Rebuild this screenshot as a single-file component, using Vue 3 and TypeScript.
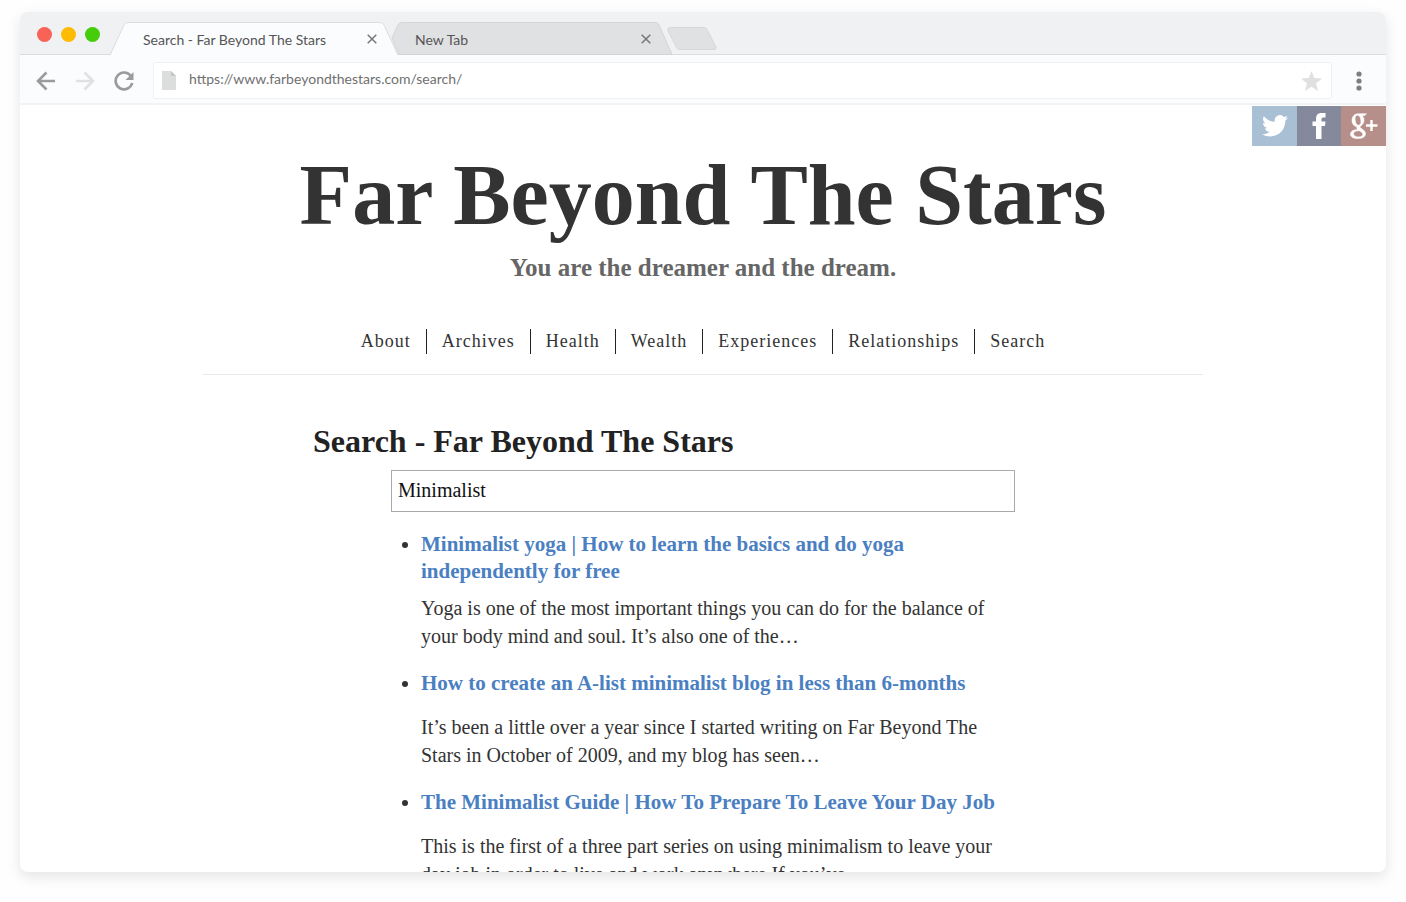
<script setup lang="ts">
import { ref } from 'vue'

interface Result {
  title: string
  excerpt: string
}

const query = ref('Minimalist')
const address = ref('https://www.farbeyondthestars.com/search/')

const links: string[] = ['About', 'Archives', 'Health', 'Wealth', 'Experiences', 'Relationships', 'Search']

const results: Result[] = [
  {
    title: 'Minimalist yoga | How to learn the basics and do yoga independently for free',
    excerpt: 'Yoga is one of the most important things you can do for the balance of your body mind and soul. It’s also one of the…',
  },
  {
    title: 'How to create an A-list minimalist blog in less than 6-months',
    excerpt: 'It’s been a little over a year since I started writing on Far Beyond The Stars in October of 2009, and my blog has seen…',
  },
  {
    title: 'The Minimalist Guide | How To Prepare To Leave Your Day Job',
    excerpt: 'This is the first of a three part series on using minimalism to leave your day job in order to live and work anywhere.If you’ve…',
  },
]
</script>

<template>
  <div class="desktop">
    <div class="window">
      <div class="tabstrip">
        <div class="lights">
          <button type="button" class="light red" aria-label="Close window"></button>
          <button type="button" class="light yellow" aria-label="Minimize window"></button>
          <button type="button" class="light green" aria-label="Maximize window"></button>
        </div>
        <div class="tab active">
          <svg class="shape" viewBox="0 0 288 34" preserveAspectRatio="none" aria-hidden="true">
            <path d="M0 34 14 3Q15 .5 18 .5H270Q273 .5 274 3L288 34Z" fill="#fbfcfe" />
            <path d="M0 33 14 3Q15 .5 18 .5H270Q273 .5 274 3L288 33" fill="none" stroke="#dcdedd" />
          </svg>
          <span class="label">Search - Far Beyond The Stars</span>
          <button type="button" class="close" aria-label="Close tab">
            <svg width="10" height="10" viewBox="0 0 10 10"><path d="M.7.7 9.3 9.3M9.3.7.7 9.3" stroke="#777" stroke-width="1.5" /></svg>
          </button>
        </div>
        <div class="tab idle">
          <svg class="shape" viewBox="0 0 282 34" preserveAspectRatio="none" aria-hidden="true">
            <path d="M1 16 7 3Q8 .5 11 .5H264Q267 .5 268 3L281 32.5H8Z" fill="#e0e1e3" stroke="#d3d5d5" />
          </svg>
          <span class="label">New Tab</span>
          <button type="button" class="close" aria-label="Close tab">
            <svg width="10" height="10" viewBox="0 0 10 10"><path d="M.7.7 9.3 9.3M9.3.7.7 9.3" stroke="#777" stroke-width="1.5" /></svg>
          </button>
        </div>
        <button type="button" class="new-tab" aria-label="New tab">
          <svg width="50" height="24" viewBox="0 0 50 24">
            <path d="M3 .5H37Q39 .5 40 2.5L49 20Q50 22.5 47 22.5H13Q10.5 22.5 9.5 20.5L1 4Q0 .5 3 .5Z" fill="#e0e1e3" stroke="#d6d8d8" />
          </svg>
        </button>
      </div>

      <div class="toolbar">
        <button type="button" class="tool" aria-label="Back">
          <svg width="20" height="20" viewBox="0 0 20 20" fill="none" stroke="#9b9b9b" stroke-width="2.6"><path d="M19 10H2.5M10.5 1.5 2 10l8.5 8.5" /></svg>
        </button>
        <button type="button" class="tool" aria-label="Forward">
          <svg width="20" height="20" viewBox="0 0 20 20" fill="none" stroke="#e0e1e2" stroke-width="2.6"><path d="M1 10H17.5M9.5 1.5 18 10l-8.5 8.5" /></svg>
        </button>
        <button type="button" class="tool" aria-label="Reload">
          <svg width="20" height="20" viewBox="0 0 20 20"><path d="M16.5 4.5A8.4 8.4 0 1 0 18.2 12" fill="none" stroke="#9b9b9b" stroke-width="2.7" /><path d="M19.5 1V9H11.5Z" fill="#9b9b9b" /></svg>
        </button>
        <div class="address">
          <svg width="14" height="19" viewBox="0 0 14 19" aria-hidden="true"><path d="M0 0H9L14 5V19H0Z" fill="#dcdedd" /><path d="M9 0 14 5H9Z" fill="#c4c6c5" /></svg>
          <input v-model="address" type="text" aria-label="Address" />
          <button type="button" class="star" aria-label="Bookmark this page">
            <svg width="21" height="20" viewBox="0 0 21 20"><path d="M10.5 0 13.3 7.1 21 7.6 15 12.4 17 20 10.5 15.8 4 20 6 12.4 0 7.6 7.7 7.1Z" fill="#dfe0e2" /></svg>
          </button>
        </div>
        <button type="button" class="menu" aria-label="Menu">
          <svg width="6" height="20" viewBox="0 0 6 20" fill="#7d7f7e"><circle cx="3" cy="3" r="2.6" /><circle cx="3" cy="10" r="2.6" /><circle cx="3" cy="17" r="2.6" /></svg>
        </button>
      </div>

      <div class="page">
        <div class="social">
          <a href="#" class="twitter" aria-label="Twitter">
            <svg width="26" height="22" viewBox="0 0 24 20"><path d="M24 2.4a9.8 9.8 0 0 1-2.8.8A4.9 4.9 0 0 0 23.300.5a9.9 9.9 0 0 1-3.1 1.2 4.9 4.9 0 0 0-8.4 4.5A14 14 0 0 1 1.7 1a4.9 4.9 0 0 0 1.5 6.6A4.9 4.9 0 0 1 1 7v.1a4.9 4.9 0 0 0 3.9 4.8 4.9 4.9 0 0 1-2.2.1 4.9 4.9 0 0 0 4.6 3.4A9.9 9.9 0 0 1 0 17.5a14 14 0 0 0 7.5 2.2c9.1 0 14-7.5 14-14v-.6A10 10 0 0 0 24 2.4Z" fill="#fff" /></svg>
          </a>
          <a href="#" class="facebook" aria-label="Facebook">
            <svg width="14" height="26" viewBox="0 0 14 26"><path d="M4 26V13H.5V8.5H4V6C4 2 6 0 9.5 0H13.5V4.5H11Q9.5 4.5 9.5 6V8.5H13.5L13 13H9.5V26Z" fill="#fff" /></svg>
          </a>
          <a href="#" class="google" aria-label="Google Plus">
            <svg width="28" height="26" viewBox="0 0 28 26">
              <path fill="#fff" stroke="#fff" stroke-width=".6" fill-rule="evenodd" d="M8 .8H16.5L14.5 2.6H12C13.4 3.9 14 5.4 14 7.3C14 10 12.5 11.5 11 12.7C9.6 13.9 9.8 14.5 11.4 15.6C14 17.3 15.5 18.5 15.5 20.8C15.5 23.7 12.5 25.5 8 25.5C3.5 25.5 .5 24 .5 21.2C.5 18.3 3.5 16.7 7.6 16.5C6.7 15.5 6.6 14.7 7 13.6C4 13.5 2 10.9 2 7.5C2 3.7 4.5 .8 8 .8ZM7.6 2.3C5.7 2.3 4.8 4 5.1 6.9C5.4 10 6.7 12.2 8.6 12.2C10.5 12.2 11.2 10.3 10.9 7.5C10.6 4.5 9.5 2.3 7.6 2.3ZM8.6 17.8C5.5 17.8 3.5 18.9 3.5 20.8C3.5 22.7 5.4 23.9 8.4 23.9C11.2 23.9 12.8 22.9 12.8 21.2C12.8 19.7 11.5 19 9.8 17.9Z" />
              <path d="M16 12.5H27.5M21.5 7V18" fill="none" stroke="#fff" stroke-width="2.4" />
            </svg>
          </a>
        </div>

        <header class="masthead">
          <h1>Far Beyond The Stars</h1>
          <p class="tagline">You are the dreamer and the dream.</p>
          <nav>
            <a v-for="link in links" :key="link" href="#">{{ link }}</a>
          </nav>
        </header>

        <main>
          <h2>Search - Far Beyond The Stars</h2>
          <div class="finder">
            <input v-model="query" type="text" aria-label="Search" />
            <ul>
              <li v-for="result in results" :key="result.title">
                <h3><a href="#">{{ result.title }}</a></h3>
                <p>{{ result.excerpt }}</p>
              </li>
            </ul>
          </div>
        </main>
      </div>
    </div>
  </div>
</template>

<style>
body {
  margin: 0;
  background: #fefefe;
}
</style>

<style scoped>
* {
  box-sizing: border-box;
}

button {
  padding: 0;
  border: 0;
  background: none;
}

svg {
  display: block;
}

.desktop {
  height: 100vh;
  padding: 12px 20px 30px;
  overflow: hidden;
}

.window {
  display: flex;
  flex-direction: column;
  height: 100%;
  overflow: hidden;
  border-radius: 8px;
  background: #fff;
  box-shadow: 0 5px 14px rgba(0, 0, 0, 0.1);
}

.tabstrip {
  display: flex;
  flex: none;
  height: 43px;
  padding-left: 17px;
  background: #f0f1f3;
  border-bottom: 1px solid #dcdedd;
  font: 14px/20px Lato, "Open Sans", sans-serif;
  color: #555;
}

.lights {
  display: flex;
  gap: 9px;
  width: 73px;
  padding-top: 15px;
}

.light {
  width: 15px;
  height: 15px;
  border-radius: 50%;
}

.red { background: #f96256; }
.yellow { background: #fdbc02; }
.green { background: #45cc0b; }

.tab {
  position: relative;
  display: flex;
  align-items: center;
  justify-content: space-between;
  height: 34px;
  margin-top: 10px;
}

.active {
  z-index: 1;
  width: 288px;
  padding: 0 21px 0 33px;
}

.idle {
  width: 282px;
  margin-left: -7px;
  padding: 0 22px 0 24px;
}

.shape {
  position: absolute;
  inset: 0;
  width: 100%;
  height: 100%;
}

.label {
  position: relative;
  padding-top: 2px;
}

.close {
  position: relative;
}

.new-tab {
  align-self: flex-start;
  margin: 15px 0 0 -6px;
}

.toolbar {
  display: flex;
  flex: none;
  align-items: center;
  height: 50px;
  padding: 3px 24px 0 16px;
  background: #fbfcfe;
  border-bottom: 2px solid #f1f3f4;
}

.tool {
  margin-right: 19px;
}

.address {
  display: flex;
  flex: 1;
  align-items: center;
  height: 37px;
  margin-right: 24px;
  padding: 0 9px 0 8px;
  background: #fff;
  border: 1px solid #eff1f1;
  border-radius: 2px;
}

.address input {
  flex: 1;
  min-width: 0;
  margin-left: 13px;
  padding: 0 0 4px;
  border: 0;
  outline: 0;
  background: none;
  font: 14px/20px Lato, "Open Sans", sans-serif;
  color: #707070;
}

.page {
  position: relative;
  flex: 1;
  min-height: 0;
  overflow: hidden;
  font-family: "Liberation Serif", serif;
  color: #333;
}

.social {
  position: absolute;
  top: 1px;
  right: 0;
  display: flex;
}

.social a {
  display: grid;
  place-items: center;
  width: 45px;
  height: 40px;
}

.twitter { background: #a8bfd4; }
.social .facebook { width: 44px; background: #84899c; }
.google { background: #b68f8a; }

.masthead {
  max-width: 1000px;
  margin: 0 auto;
  padding-top: 40px;
  border-bottom: 1px solid #e9e9e9;
  text-align: center;
}

h1 {
  margin: 0;
  font-size: 86px;
  line-height: 100px;
}

.tagline {
  margin: 8px 0 0;
  font-size: 25px;
  font-weight: bold;
  line-height: 30px;
  color: #666;
}

nav {
  display: flex;
  justify-content: center;
  padding: 46px 0 20px;
}

nav a {
  padding: 0 15px;
  border-left: 1px solid #222;
  font-size: 18px;
  line-height: 25px;
  letter-spacing: 1px;
  color: #333;
  text-decoration: none;
}

nav a:first-child {
  border-left: 0;
}

main {
  max-width: 780px;
  margin: 0 auto;
  padding-top: 46px;
}

h2 {
  margin: 0;
  font-size: 32px;
  line-height: 40px;
  color: #222;
}

.finder {
  width: 80%;
  margin: 9px auto 0;
}

.finder input {
  display: block;
  width: 100%;
  height: 42px;
  padding: 0 6px 2px;
  border: 1px solid #aaa;
  outline: 0;
  font: 20px/28px "Liberation Serif", serif;
  color: #111;
}

ul {
  margin: 18px 0 0;
  padding-left: 30px;
  font-size: 20px;
  line-height: 28px;
}

h3 {
  min-height: 34px;
  margin: 0;
  font-size: 21px;
  line-height: 27px;
}

h3 a {
  color: #4a80c2;
  text-decoration: none;
}

li p {
  margin: 9px 0 19px;
}
</style>
